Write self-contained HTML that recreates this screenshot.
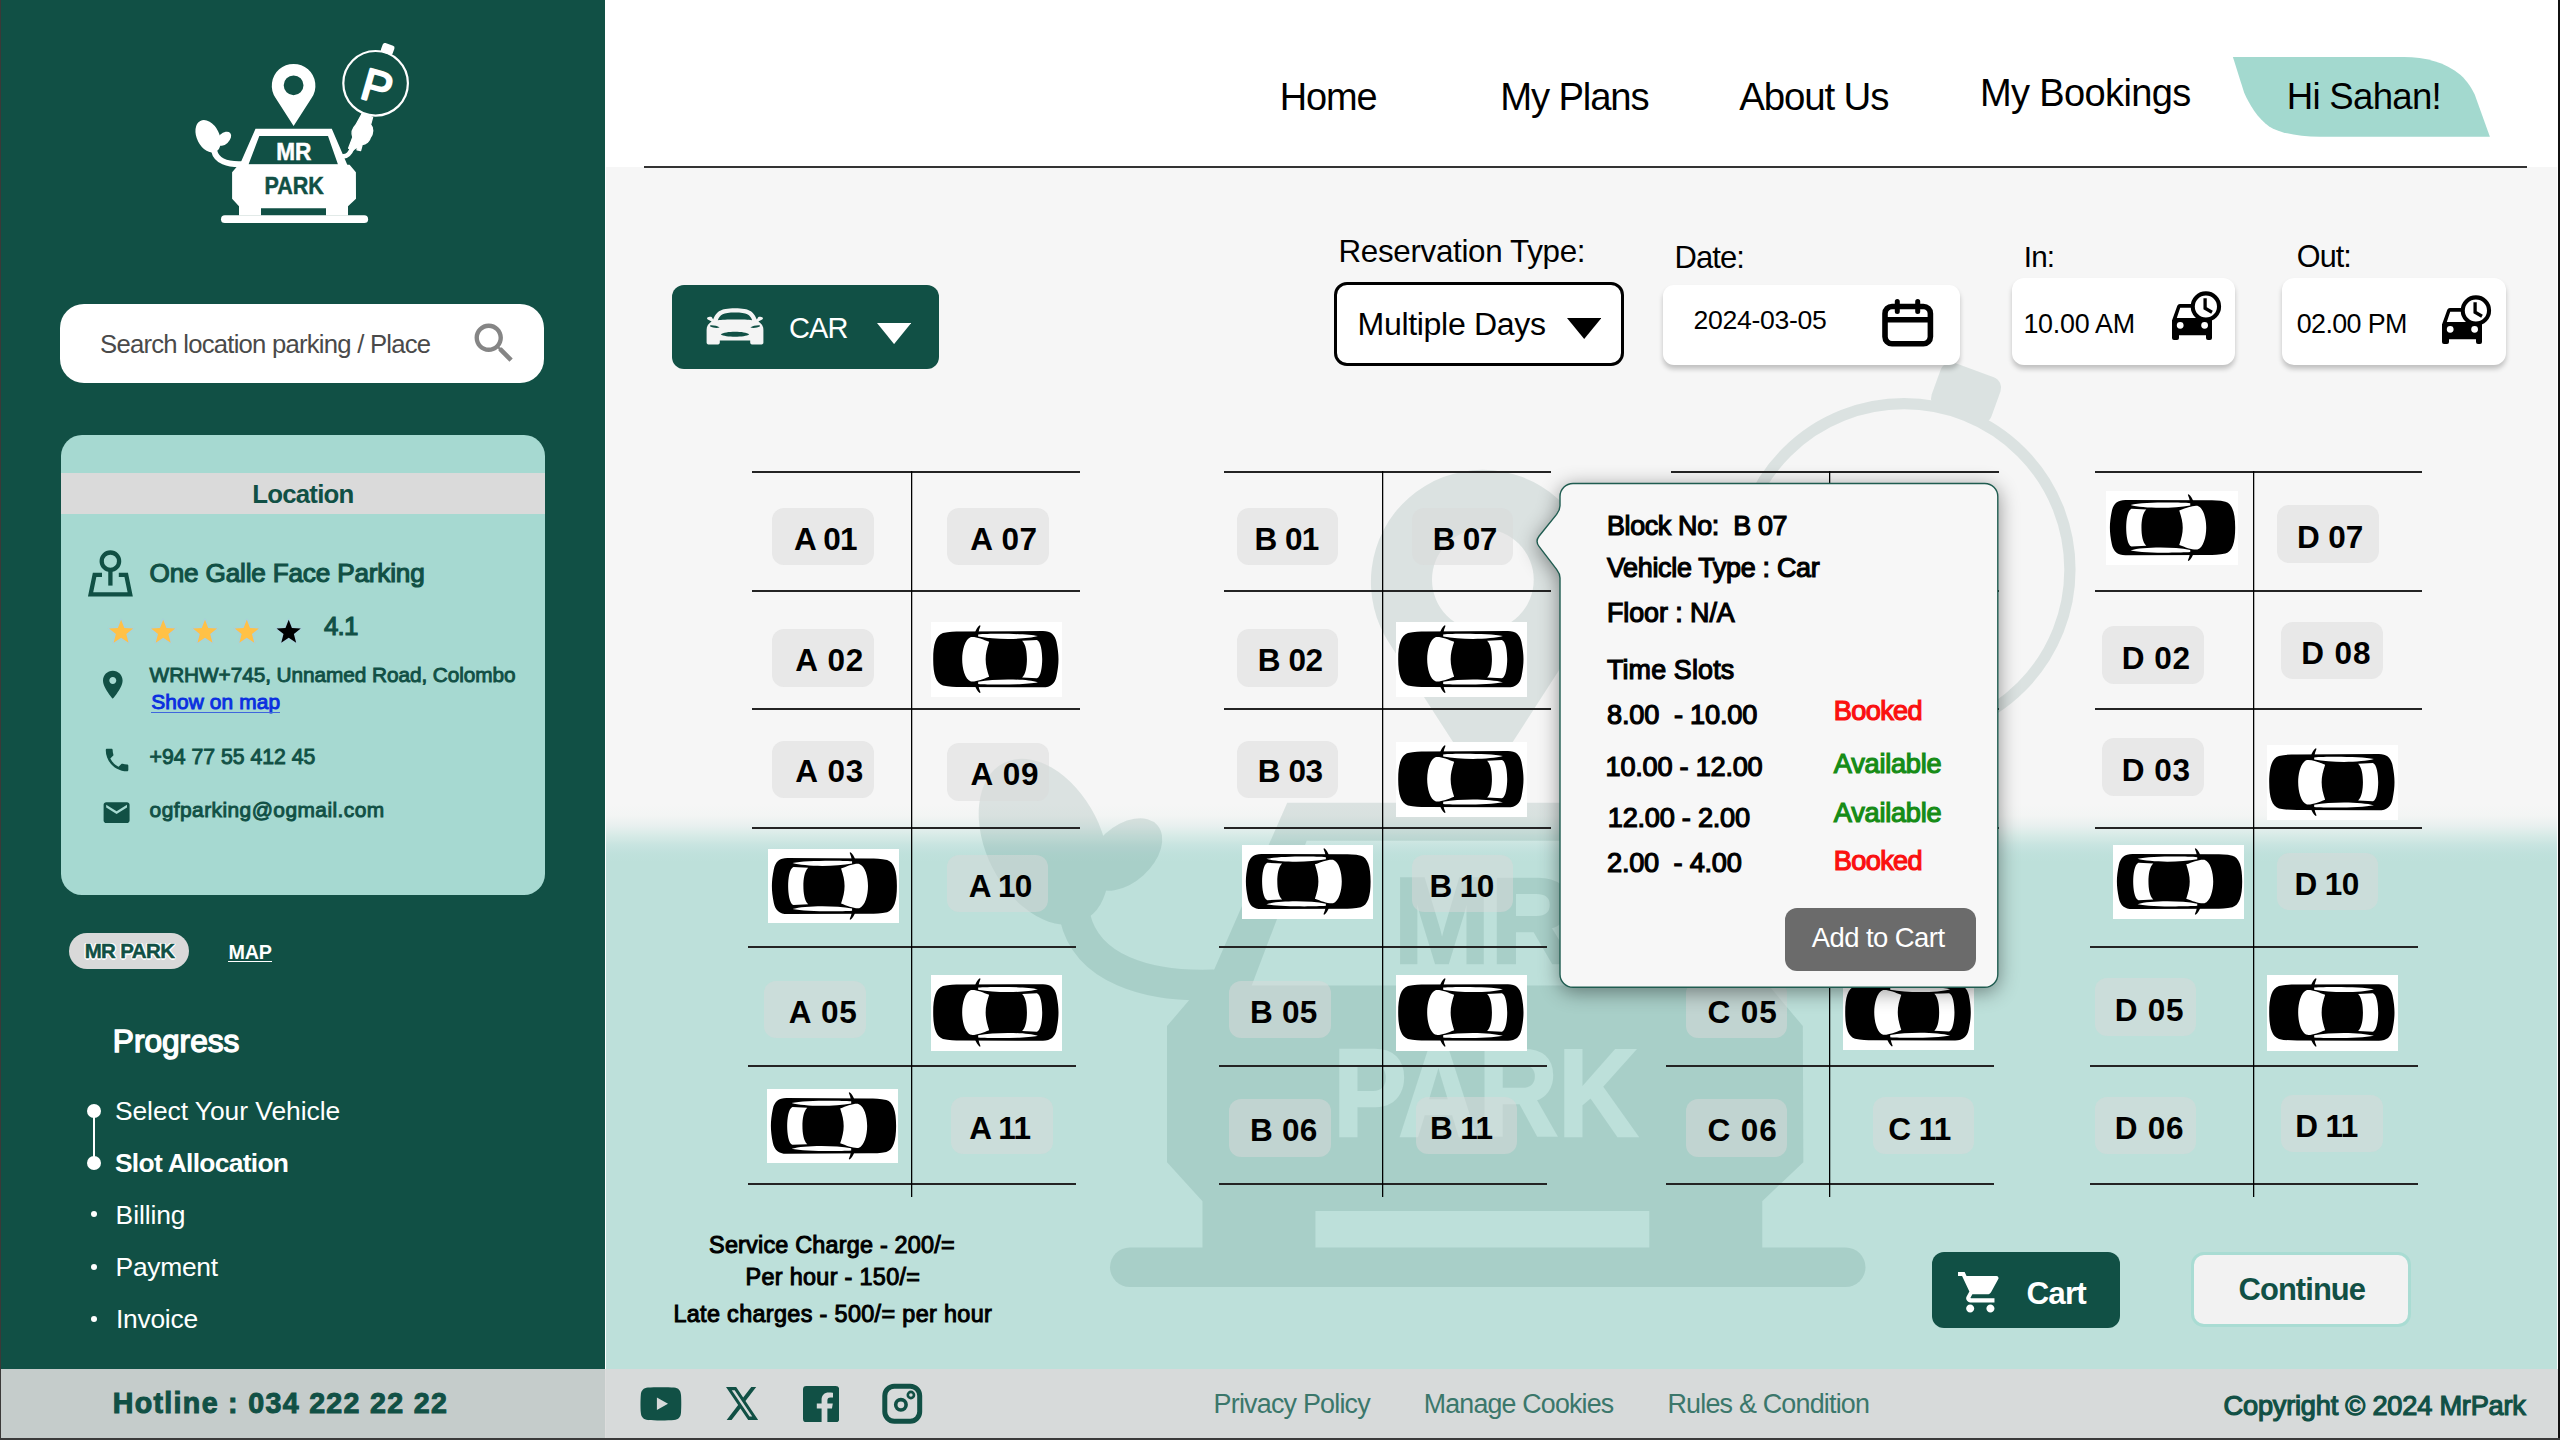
<!DOCTYPE html><html lang="en"><head><meta charset="utf-8"><title>MR PARK - Slot Allocation</title><style>
*{margin:0;padding:0;box-sizing:border-box}
html,body{width:2560px;height:1440px;overflow:hidden;background:#fff}
body{font-family:"Liberation Sans",Arial,Helvetica,sans-serif;}
#root{position:relative;width:2560px;height:1440px;overflow:hidden;background:#fff}
#root div,#root span,#root a,#root svg,#root h1,#root h2,#root p,#root li,#root button,#root label{position:absolute}
.t{white-space:pre;line-height:1;font-weight:400;text-decoration:none}
ul{list-style:none}
button{border:0;background:none;font:inherit}
.lbl{background:rgba(217,217,217,.5);border-radius:12px}
.carbg{background:#fff}
.hl{height:2px;background:#242424}
.vl{width:2px;background:linear-gradient(to right,#000 0,#000 1px,rgba(0,0,0,.28) 1px,rgba(0,0,0,.28) 2px)}
.shadow{box-shadow:0 4px 5px rgba(0,0,0,.22)}
</style></head><body><div id="root">
<div class="mainbg" style="left:605.50px;top:167.00px;width:1951.50px;height:1273.00px;background:linear-gradient(to bottom,#f6f6f6 0,#f6f6f6 637px,#f3f5f4 649px,#e8f0ef 659px,#d8ebe7 668px,#c8e4e0 678px,#c0e1dc 686px,#bde0da 695px,#bde0da 100%)"></div>
<svg class="wm" style="left:606px;top:167px" width="1951" height="1202" viewBox="606 167 1951 1202"><g transform="translate(-25.06 141.64) scale(5.136)"><g opacity="0.115"><mask id="pk" maskUnits="userSpaceOnUse" x="180" y="30" width="260" height="210"><rect x="180" y="30" width="260" height="210" fill="#fff"/><text x="294.1" y="193.7" font-size="24.1" font-family="Liberation Sans, Arial, sans-serif" font-weight="700" text-anchor="middle" textLength="59.4" lengthAdjust="spacingAndGlyphs" fill="#000" stroke="#000" stroke-width=".5">PARK</text></mask><g fill="#115045" stroke="none"><rect x="221" y="215.3" width="147.1" height="7.7" rx="3.85"/><path mask="url(#pk)" d="M232.1,172.2 L238.5,164.7 L349.6,164.7 L355.9,172.2 L356,198.7 L348,206.3 L348,215.5 L326,215.5 L326,208.2 L261,208.2 L261,215.5 L239,215.5 L239,206.3 L232.1,198.7 Z"/><path fill-rule="evenodd" d="M255.5,128.7 L331.8,128.7 L347.6,165.5 L239.4,165.5 Z M259.3,136.1 L328,136.1 L337.9,164.3 L248.6,164.3 Z"/><path fill-rule="evenodd" d="M293.6,125.9 L275.6,98 A21.8,21.8 0 1 1 311.6,98 Z M303.5,85.3 A9.9,9.9 0 1 0 283.7,85.3 A9.9,9.9 0 1 0 303.5,85.3 Z"/><ellipse cx="208.1" cy="136.3" rx="11.2" ry="17.2" transform="rotate(-27 208.1 136.3)"/><ellipse cx="223.8" cy="138.8" rx="5.5" ry="8.6" transform="rotate(48 223.8 138.8)"/><rect x="381.5" y="44.2" width="12.4" height="9.5" rx="2.2" transform="rotate(20 387.7 48.9)"/><path stroke="#115045" stroke-width="1.3" stroke-linejoin="round" d="M362.3,113.2 L372.6,117.4 L370.6,124.6 C373.6,127.6 373.4,133.6 370.3,137.6 C369.6,141 366.2,144.3 362.2,144.6 L360.6,150.6 L357,149.8 L357.6,146.6 L352.6,150.6 L348.6,148.2 L352.8,137.2 C351.4,133.2 352.6,128.2 355.8,125 Z"/></g><g fill="none" stroke="#115045" stroke-linecap="round"><path d="M214.2,151 C216.5,161 228,164.6 241,164.2" stroke-width="6"/><path d="M352,148.5 C350,154 346.5,156.2 343.2,156.4" stroke-width="4.6"/><circle cx="375.6" cy="83.3" r="32.3" stroke-width="2.2"/></g><g font-family="Liberation Sans, Arial, sans-serif" font-weight="700" text-anchor="middle"><text x="293.8" y="159.9" font-size="23.7" fill="#115045" stroke="#115045" stroke-width=".5" textLength="35.2" lengthAdjust="spacingAndGlyphs">MR</text><text x="377.2" y="102.3" font-size="45" fill="#115045" stroke="#115045" stroke-width="2.1" stroke-linejoin="round" transform="rotate(16 377.3 86.85)" style="font-weight:400">P</text></g></g></g></svg>
<aside>
<div class="side" style="left:0.00px;top:0.00px;width:604.50px;height:1440.00px;background:#115045"></div>
<svg style="left:180px;top:30px" width="260" height="210" viewBox="180 30 260 210"><g fill="#fff" stroke="none"><rect x="221" y="215.3" width="147.1" height="7.7" rx="3.85"/><path  d="M232.1,172.2 L238.5,164.7 L349.6,164.7 L355.9,172.2 L356,198.7 L348,206.3 L348,215.5 L326,215.5 L326,208.2 L261,208.2 L261,215.5 L239,215.5 L239,206.3 L232.1,198.7 Z"/><path fill-rule="evenodd" d="M255.5,128.7 L331.8,128.7 L347.6,165.5 L239.4,165.5 Z M259.3,136.1 L328,136.1 L337.9,164.3 L248.6,164.3 Z"/><path fill-rule="evenodd" d="M293.6,125.9 L275.6,98 A21.8,21.8 0 1 1 311.6,98 Z M303.5,85.3 A9.9,9.9 0 1 0 283.7,85.3 A9.9,9.9 0 1 0 303.5,85.3 Z"/><ellipse cx="208.1" cy="136.3" rx="11.2" ry="17.2" transform="rotate(-27 208.1 136.3)"/><ellipse cx="223.8" cy="138.8" rx="5.5" ry="8.6" transform="rotate(48 223.8 138.8)"/><rect x="381.5" y="44.2" width="12.4" height="9.5" rx="2.2" transform="rotate(20 387.7 48.9)"/><path stroke="#fff" stroke-width="1.3" stroke-linejoin="round" d="M362.3,113.2 L372.6,117.4 L370.6,124.6 C373.6,127.6 373.4,133.6 370.3,137.6 C369.6,141 366.2,144.3 362.2,144.6 L360.6,150.6 L357,149.8 L357.6,146.6 L352.6,150.6 L348.6,148.2 L352.8,137.2 C351.4,133.2 352.6,128.2 355.8,125 Z"/></g><g fill="none" stroke="#fff" stroke-linecap="round"><path d="M214.2,151 C216.5,161 228,164.6 241,164.2" stroke-width="6"/><path d="M352,148.5 C350,154 346.5,156.2 343.2,156.4" stroke-width="4.6"/><circle cx="375.6" cy="83.3" r="32.3" stroke-width="2.2"/></g><g font-family="Liberation Sans, Arial, sans-serif" font-weight="700" text-anchor="middle"><text x="293.8" y="159.9" font-size="23.7" fill="#fff" stroke="#fff" stroke-width=".5" textLength="35.2" lengthAdjust="spacingAndGlyphs">MR</text><text x="294.1" y="193.7" font-size="24.1" font-family="Liberation Sans, Arial, sans-serif" font-weight="700" text-anchor="middle" textLength="59.4" lengthAdjust="spacingAndGlyphs" fill="#115045" stroke="#115045" stroke-width=".5">PARK</text><text x="377.2" y="102.3" font-size="45" fill="#fff" stroke="#fff" stroke-width="2.1" stroke-linejoin="round" transform="rotate(16 377.3 86.85)" style="font-weight:400">P</text></g></svg>
<div style="left:60.00px;top:304.30px;width:484.10px;height:78.90px;background:#fff;border-radius:24px"></div>
<span class="t" style="left:100.10px;top:332.00px;font-size:25.70px;letter-spacing:-0.771px;color:#4a4a4a;">Search location parking / Place</span>
<svg style="left:468px;top:317.3px" width="52.4" height="52.4" viewBox="0 0 24 24"><path fill="#858585" d="M15.5 14h-.79l-.28-.27C15.41 12.59 16 11.11 16 9.5 16 5.91 13.09 3 9.5 3S3 5.91 3 9.5 5.91 16 9.5 16c1.61 0 3.09-.59 4.23-1.57l.27.28v.79l5 4.99L20.49 19l-4.99-5zm-6 0C7.01 14 5 11.99 5 9.5S7.01 5 9.5 5 14 7.01 14 9.5 11.99 14 9.5 14z"/></svg>
<div style="left:61.00px;top:435.00px;width:484.00px;height:459.60px;background:#a6d9d1;border-radius:21px"></div>
<div style="left:61.00px;top:472.80px;width:484.00px;height:41.20px;background:#dadada"></div>
<h2 class="t" style="left:252.20px;top:482.00px;font-size:25.83px;letter-spacing:-0.775px;color:#115045;font-weight:700;">Location</h2>
<svg style="left:84px;top:546px" width="54" height="56" viewBox="84 546 54 56"><g fill="none" stroke="#115045" stroke-width="4.3"><circle cx="110.4" cy="561.2" r="8.7"/><path d="M110.4,570 L110.4,585.6"/><path d="M102,574.9 L94.6,574.9 L90.6,594.4 L130.2,594.4 L126.2,574.9 L118.8,574.9" stroke-linejoin="miter"/></g></svg>
<span class="t" style="left:149.60px;top:560.00px;font-size:26.14px;letter-spacing:-0.177px;color:#115045;-webkit-text-stroke:1.15px #115045;">One Galle Face Parking</span>
<svg style="left:100px;top:612px" width="210" height="40" viewBox="100 612 210 40"><polygon points="121.10,619.70 124.31,627.98 133.18,628.48 126.29,634.09 128.56,642.67 121.10,637.86 113.64,642.67 115.91,634.09 109.02,628.48 117.89,627.98" fill="none" stroke="#a9cfe0" stroke-width="2.2" stroke-linejoin="round" opacity=".7"/><polygon points="121.10,619.70 124.31,627.98 133.18,628.48 126.29,634.09 128.56,642.67 121.10,637.86 113.64,642.67 115.91,634.09 109.02,628.48 117.89,627.98" fill="#ffc146"/><polygon points="163.20,619.70 166.41,627.98 175.28,628.48 168.39,634.09 170.66,642.67 163.20,637.86 155.74,642.67 158.01,634.09 151.12,628.48 159.99,627.98" fill="none" stroke="#a9cfe0" stroke-width="2.2" stroke-linejoin="round" opacity=".7"/><polygon points="163.20,619.70 166.41,627.98 175.28,628.48 168.39,634.09 170.66,642.67 163.20,637.86 155.74,642.67 158.01,634.09 151.12,628.48 159.99,627.98" fill="#ffc146"/><polygon points="205.00,619.70 208.21,627.98 217.08,628.48 210.19,634.09 212.46,642.67 205.00,637.86 197.54,642.67 199.81,634.09 192.92,628.48 201.79,627.98" fill="none" stroke="#a9cfe0" stroke-width="2.2" stroke-linejoin="round" opacity=".7"/><polygon points="205.00,619.70 208.21,627.98 217.08,628.48 210.19,634.09 212.46,642.67 205.00,637.86 197.54,642.67 199.81,634.09 192.92,628.48 201.79,627.98" fill="#ffc146"/><polygon points="246.80,619.70 250.01,627.98 258.88,628.48 251.99,634.09 254.26,642.67 246.80,637.86 239.34,642.67 241.61,634.09 234.72,628.48 243.59,627.98" fill="none" stroke="#a9cfe0" stroke-width="2.2" stroke-linejoin="round" opacity=".7"/><polygon points="246.80,619.70 250.01,627.98 258.88,628.48 251.99,634.09 254.26,642.67 246.80,637.86 239.34,642.67 241.61,634.09 234.72,628.48 243.59,627.98" fill="#ffc146"/><polygon points="288.70,619.70 291.91,627.98 300.78,628.48 293.89,634.09 296.16,642.67 288.70,637.86 281.24,642.67 283.51,634.09 276.62,628.48 285.49,627.98" fill="none" stroke="#a9cfe0" stroke-width="2.2" stroke-linejoin="round" opacity=".7"/><polygon points="288.70,619.70 291.91,627.98 300.78,628.48 293.89,634.09 296.16,642.67 288.70,637.86 281.24,642.67 283.51,634.09 276.62,628.48 285.49,627.98" fill="#000"/></svg>
<span class="t" style="left:323.90px;top:614.00px;font-size:25.94px;letter-spacing:-0.778px;color:#115045;-webkit-text-stroke:1.14px #115045;">4.1</span>
<svg style="left:95.8px;top:667.5px" width="33.6" height="33.6" viewBox="0 0 24 24"><path fill="#115045" d="M12 2C8.13 2 5 5.13 5 9c0 5.25 7 13 7 13s7-7.75 7-13c0-3.87-3.13-7-7-7zm0 9.500c-1.38 0-2.5-1.12-2.5-2.5s1.12-2.5 2.5-2.5 2.5 1.12 2.5 2.5-1.12 2.5-2.5 2.5z"/></svg>
<span class="t" style="left:149.60px;top:665.00px;font-size:20.77px;letter-spacing:-0.052px;color:#115045;-webkit-text-stroke:0.91px #115045;">WRHW+745, Unnamed Road, Colombo</span>
<a class="t" style="left:151.20px;top:692.00px;font-size:20.92px;letter-spacing:0.100px;color:#0a2fe0;-webkit-text-stroke:0.92px #0a2fe0;">Show on map</a>
<div style="left:151.20px;top:711.50px;width:128.90px;height:1.70px;background:#3f66dd"></div>
<svg style="left:101.6px;top:745.2px" width="30.1" height="30.1" viewBox="0 0 24 24"><path fill="#115045" d="M6.62 10.79c1.44 2.83 3.76 5.14 6.59 6.59l2.2-2.2c.27-.27.67-.36 1.02-.24 1.12.37 2.33.57 3.57.57.55 0 1 .45 1 1V20c0 .55-.45 1-1 1-9.39 0-17-7.61-17-17 0-.55.45-1 1-1h3.5c.55 0 1 .45 1 1 0 1.25.2 2.45.57 3.57.11.35.03.74-.25 1.02l-2.2 2.2z"/></svg>
<span class="t" style="left:149.60px;top:746.00px;font-size:21.21px;letter-spacing:0.001px;color:#115045;-webkit-text-stroke:0.93px #115045;">+94 77 55 412 45</span>
<svg style="left:101.2px;top:797.2px" width="31.2" height="31.2" viewBox="0 0 24 24"><path fill="#115045" d="M20 4H4c-1.1 0-1.99.9-1.99 2L2 18c0 1.1.9 2 2 2h16c1.1 0 2-.9 2-2V6c0-1.1-.9-2-2-2zm0 4l-8 5-8-5V6l8 5 8-5v2z"/></svg>
<span class="t" style="left:149.60px;top:800.00px;font-size:20.92px;letter-spacing:0.443px;color:#115045;-webkit-text-stroke:0.92px #115045;">ogfparking@ogmail.com</span>
<div style="left:68.75px;top:932.80px;width:120.25px;height:36.40px;background:#d9d9d9;border-radius:18.2px"></div>
<span class="t" style="left:84.70px;top:941.00px;font-size:20.47px;letter-spacing:-0.614px;color:#115045;font-weight:700;text-shadow:-1.5px 0 #fff,1.5px 0 #fff,0 -1.5px #fff,0 1.5px #fff,-1.1px -1.1px #fff,1.1px -1.1px #fff,-1.1px 1.1px #fff,1.1px 1.1px #fff,0 0 1px #fff;-webkit-text-stroke:.5px #115045;">MR PARK</span>
<a class="t" style="left:228.40px;top:943.00px;font-size:19.75px;letter-spacing:-0.196px;color:#fff;font-weight:700;">MAP</a>
<div style="left:228.40px;top:960.60px;width:43.50px;height:1.70px;background:#fff"></div>
<h2 class="t" style="left:112.80px;top:1026.00px;font-size:31.66px;letter-spacing:-0.016px;color:#fff;-webkit-text-stroke:1.39px #fff;">Progress</h2>
<div style="left:92.80px;top:1110.60px;width:2.60px;height:52.30px;background:#fff"></div>
<div style="left:87.00px;top:1103.50px;width:14.20px;height:14.20px;background:#fff;border-radius:50%"></div>
<div style="left:87.00px;top:1155.80px;width:14.20px;height:14.20px;background:#fff;border-radius:50%"></div>
<div style="left:91.10px;top:1211.40px;width:6.00px;height:6.00px;background:#fff;border-radius:50%"></div>
<div style="left:91.10px;top:1263.60px;width:6.00px;height:6.00px;background:#fff;border-radius:50%"></div>
<div style="left:91.10px;top:1315.50px;width:6.00px;height:6.00px;background:#fff;border-radius:50%"></div>
<span class="t" style="left:114.90px;top:1098.00px;font-size:26.43px;letter-spacing:-0.052px;color:#fff;">Select Your Vehicle</span>
<span class="t" style="left:114.90px;top:1150.00px;font-size:26.43px;letter-spacing:-0.704px;color:#fff;font-weight:700;">Slot Allocation</span>
<span class="t" style="left:115.60px;top:1202.00px;font-size:26.43px;letter-spacing:-0.088px;color:#fff;">Billing</span>
<span class="t" style="left:115.60px;top:1254.00px;font-size:26.43px;letter-spacing:-0.302px;color:#fff;">Payment</span>
<span class="t" style="left:115.90px;top:1306.00px;font-size:26.43px;letter-spacing:-0.241px;color:#fff;">Invoice</span>
</aside>
<header>
<div style="left:604.50px;top:0.00px;width:1953.00px;height:167.00px;background:#fff"></div>
<nav>
<a class="t" style="left:1279.80px;top:79.00px;font-size:37.94px;letter-spacing:-1.138px;color:#000;">Home</a>
<a class="t" style="left:1500.30px;top:78.00px;font-size:38.26px;letter-spacing:-1.148px;color:#000;">My Plans</a>
<a class="t" style="left:1739.30px;top:78.00px;font-size:38.46px;letter-spacing:-1.154px;color:#000;">About Us</a>
<a class="t" style="left:1980.00px;top:74.00px;font-size:38.05px;letter-spacing:-0.646px;color:#000;">My Bookings</a>
<svg style="left:2225px;top:50px" width="275" height="95" viewBox="2225 50 275 95"><path fill="#a3d9cf" d="M2232.9,57 L2404,57 C2425,57 2445,62 2460.6,75 C2468,82 2472,89 2474.8,94.7 L2489.9,136.8 L2320,136.8 C2298,136.8 2280,133 2269.2,126.4 C2258,119 2249,104 2244.1,92.5 Z"/></svg>
<a class="t" style="left:2286.80px;top:79.00px;font-size:36.60px;letter-spacing:-0.719px;color:#000;">Hi Sahan!</a>
</nav>
<div style="left:644.00px;top:166.20px;width:1883.00px;height:2.20px;background:#333"></div>
</header>
<main>
<button style="left:672.30px;top:284.60px;width:266.90px;height:84.40px;background:#115045;border-radius:12px"></button>
<svg style="left:700px;top:300px" width="70" height="52" viewBox="700 300 70 52">
<path fill="#f4f4f4" d="M713.2,319.6 C716,312 720,308.2 735,308.2 C750,308.2 754,312 756.8,319.6 L757.6,318.2 C758,317 759.2,316.6 760.4,316.8 L762.2,317.2 C763.2,317.6 763.2,318.8 762.2,319.4 L758.4,321.4 C761.6,323.4 763.4,326 763.4,330 L763.4,342.6 C763.4,343.8 762.8,344.4 761.6,344.4 L752,344.4 C750.8,344.4 750.2,343.8 750.2,342.6 L750.2,340.4 L719.8,340.4 L719.8,342.6 C719.8,343.8 719.2,344.4 718,344.4 L708.4,344.4 C707.2,344.4 706.6,343.8 706.6,342.6 L706.6,330 C706.6,326 708.4,323.4 711.6,321.4 L707.8,319.4 C706.8,318.8 706.8,317.6 707.8,317.2 L709.6,316.8 C710.8,316.6 712,317 712.4,318.2 Z"/>
<g fill="#115045"><path d="M717.8,320.2 C720,314.4 723,312.4 735,312.4 C747,312.4 750,314.4 752.2,320.2 C746,319.2 724,319.2 717.8,320.2 Z"/>
<path d="M710.2,325.2 C713.6,325 717.4,325.8 719.6,327.6 C716.6,328.2 712.6,327.8 710.2,326.6 Z"/>
<path d="M759.8,325.2 C756.4,325 752.6,325.8 750.4,327.6 C753.4,328.2 757.4,327.8 759.8,326.6 Z"/>
<path d="M720.8,334.4 C725,331 745,331 749.2,334.4 C745,337.4 725,337.4 720.8,334.4 Z"/></g></svg>
<span class="t" style="left:788.90px;top:314.00px;font-size:29.01px;letter-spacing:-0.870px;color:#fff;">CAR</span>
<svg style="left:876.6px;top:323.3px" width="34.2" height="21.1" viewBox="0 0 34.2 21.1"><path fill="#fff" d="M0,0 L34.2,0 L17.1,21.1 Z"/></svg>
<label class="t" style="left:1338.50px;top:236.00px;font-size:31.37px;letter-spacing:-0.325px;color:#000;">Reservation Type:</label>
<div style="left:1333.50px;top:281.90px;width:290.50px;height:84.10px;background:#fff;border:3px solid #000;border-radius:13px"></div>
<span class="t" style="left:1357.50px;top:308.00px;font-size:32.10px;letter-spacing:-0.326px;color:#000;">Multiple Days</span>
<svg style="left:1566.9px;top:318px" width="34.4" height="21" viewBox="0 0 34.4 21"><path fill="#000" d="M0,0 L34.4,0 L17.2,21 Z"/></svg>
<label class="t" style="left:1674.50px;top:243.00px;font-size:30.97px;letter-spacing:-0.929px;color:#000;">Date:</label>
<div class="shadow" style="left:1662.80px;top:285.00px;width:297.10px;height:79.60px;background:#fff;border-radius:11px"></div>
<span class="t" style="left:1693.40px;top:307.00px;font-size:26.58px;letter-spacing:-0.284px;color:#000;">2024-03-05</span>
<svg style="left:1876px;top:294px" width="64" height="58" viewBox="1876 294 64 58"><g fill="none" stroke="#000" stroke-width="5.6"><rect x="1885" y="306.5" width="45.4" height="37.3" rx="7"/><path d="M1885,319.8 L1930.4,319.8"/><path d="M1897.3,301.6 L1897.3,311.6 M1917.7,301.6 L1917.7,311.6" stroke-linecap="round" stroke-width="5"/></g></svg>
<label class="t" style="left:2023.80px;top:242.00px;font-size:29.66px;letter-spacing:-0.890px;color:#000;">In:</label>
<div class="shadow" style="left:2011.80px;top:278.30px;width:223.60px;height:86.40px;background:#fff;border-radius:12px"></div>
<span class="t" style="left:2023.40px;top:311.00px;font-size:26.87px;letter-spacing:-0.247px;color:#000;">10.00 AM</span>
<svg style="left:2166px;top:286px" width="62" height="60" viewBox="2166 286 62 60">
<path fill="#000" fill-rule="evenodd" d="M2179.8,304 L2202,304 L2212,318 L2212,338 Q2212,340 2210,340 L2208,340 Q2206,340 2206,338 L2206,335.2 L2179,335.2 L2179,338 Q2179,340 2177,340 L2174,340 Q2172,340 2172,338 L2172,320.5 L2177.3,305.8 Q2178,304 2179.8,304 Z M2180.2,307.7 L2196,307.7 L2201,317.9 L2176.8,317.9 Z M2183.6,325.3 A3.4,3.4 0 1 0 2176.8,325.3 A3.4,3.4 0 1 0 2183.6,325.3 Z M2208,325.3 A3.4,3.4 0 1 0 2201.2,325.3 A3.4,3.4 0 1 0 2208,325.3 Z"/>
<circle cx="2205.9" cy="306.5" r="13.15" fill="#fff" stroke="#000" stroke-width="4.1"/>
<path d="M2205.1,298.2 L2205.1,308.3 L2212,312.2" fill="none" stroke="#000" stroke-width="3.3"/></svg>
<label class="t" style="left:2296.80px;top:241.00px;font-size:30.56px;letter-spacing:-0.917px;color:#000;">Out:</label>
<div class="shadow" style="left:2282.10px;top:278.30px;width:224.00px;height:86.40px;background:#fff;border-radius:12px"></div>
<span class="t" style="left:2296.80px;top:311.00px;font-size:26.87px;letter-spacing:-0.615px;color:#000;">02.00 PM</span>
<svg style="left:2436px;top:289.8px" width="62" height="60" viewBox="2166 286 62 60">
<path fill="#000" fill-rule="evenodd" d="M2179.8,304 L2202,304 L2212,318 L2212,338 Q2212,340 2210,340 L2208,340 Q2206,340 2206,338 L2206,335.2 L2179,335.2 L2179,338 Q2179,340 2177,340 L2174,340 Q2172,340 2172,338 L2172,320.5 L2177.3,305.8 Q2178,304 2179.8,304 Z M2180.2,307.7 L2196,307.7 L2201,317.9 L2176.8,317.9 Z M2183.6,325.3 A3.4,3.4 0 1 0 2176.8,325.3 A3.4,3.4 0 1 0 2183.6,325.3 Z M2208,325.3 A3.4,3.4 0 1 0 2201.2,325.3 A3.4,3.4 0 1 0 2208,325.3 Z"/>
<circle cx="2205.9" cy="306.5" r="13.15" fill="#fff" stroke="#000" stroke-width="4.1"/>
<path d="M2205.1,298.2 L2205.1,308.3 L2212,312.2" fill="none" stroke="#000" stroke-width="3.3"/></svg>
<section>
<div class="hl" style="left:752.20px;top:471.00px;width:327.80px;height:2.00px;"></div><div class="hl" style="left:752.20px;top:590.00px;width:327.80px;height:2.00px;"></div><div class="hl" style="left:752.20px;top:708.00px;width:327.80px;height:2.00px;"></div><div class="hl" style="left:752.20px;top:827.00px;width:327.80px;height:2.00px;"></div><div class="hl" style="left:748.00px;top:946.00px;width:327.80px;height:2.00px;"></div><div class="hl" style="left:748.00px;top:1065.00px;width:327.80px;height:2.00px;"></div><div class="hl" style="left:748.00px;top:1183.00px;width:327.80px;height:2.00px;"></div><div class="vl" style="left:911.00px;top:471.00px;width:2.00px;height:726.40px;"></div>
<div class="lbl" style="left:771.70px;top:507.80px;width:102.20px;height:57.50px;"></div><span class="t" style="left:794.05px;top:524.00px;font-size:31.52px;letter-spacing:-0.600px;color:#000;font-weight:700;">A 01</span>
<div class="lbl" style="left:946.70px;top:507.80px;width:102.20px;height:57.50px;"></div><span class="t" style="left:970.30px;top:524.00px;font-size:31.52px;letter-spacing:0.434px;color:#000;font-weight:700;">A 07</span>
<div class="lbl" style="left:771.70px;top:628.60px;width:102.20px;height:58.10px;"></div><span class="t" style="left:795.30px;top:645.00px;font-size:31.52px;letter-spacing:0.867px;color:#000;font-weight:700;">A 02</span>
<svg class="carbg" style="left:930.6px;top:622.2px" width="131.4" height="75.0" viewBox="0 0 131.5 75" preserveAspectRatio="none"><g><path fill="#000" d="M2.2,37.2 C2.2,22 5,13.2 12,11 C18,9.5 24,9.5 30,9.5 L112,9.1 C120,9.1 124,13 125.6,20 C127,27 127.6,32 127.6,37.2 C127.6,42.4 127,47.4 125.6,54.4 C124,61.4 120,65.3 112,65.3 L30,64.9 C24,64.9 18,64.9 12,63.4 C5,61.2 2.2,52.4 2.2,37.2 Z"/>
<path fill="#000" d="M44.1,10.4 C45,7.6 46.8,4.8 48.8,3.3 L49.6,3.8 C48.6,6.2 47.8,8.6 47.4,11 Z M44.1,64 C45,66.8 46.8,69.6 48.8,71.1 L49.6,70.6 C48.6,68.2 47.8,65.8 47.4,63.4 Z"/>
<g fill="#fff"><path d="M40,15 C34,17 31.2,28 31.2,37.2 C31.2,46.4 34,57.4 40,59.4 C45,60 52,57 58.2,54.7 C56,48 54.7,43 54.7,37.2 C54.7,31.4 56,26.4 58.2,19.7 C52,17.4 45,14.4 40,15 Z"/>
<path d="M91.2,18.8 L106,18.1 C110,19.4 111.3,30 111.3,37.2 C111.3,44.4 110,55 106,56.3 L91.2,55.6 C95,52 96,44 96,37.2 C96,30.4 95,22.4 91.2,18.8 Z"/>
<path d="M47.2,12.4 C60,11.4 95,11.4 106.9,14.1 C95,17.6 65,18 47.2,14.6 Z"/>
<path d="M47.2,62 C60,63 95,63 106.9,60.3 C95,56.8 65,56.4 47.2,59.8 Z"/></g></g></svg>
<div class="lbl" style="left:771.70px;top:740.60px;width:102.20px;height:57.70px;"></div><span class="t" style="left:795.30px;top:756.00px;font-size:31.52px;letter-spacing:0.867px;color:#000;font-weight:700;">A 03</span>
<div class="lbl" style="left:946.70px;top:742.50px;width:102.20px;height:58.10px;"></div><span class="t" style="left:970.55px;top:759.00px;font-size:31.52px;letter-spacing:0.900px;color:#000;font-weight:700;">A 09</span>
<svg class="carbg" style="left:767.8px;top:848.6px" width="131.1" height="74.7" viewBox="0 0 131.5 75" preserveAspectRatio="none"><g transform="translate(131.5 0) scale(-1 1)"><path fill="#000" d="M2.2,37.2 C2.2,22 5,13.2 12,11 C18,9.5 24,9.5 30,9.5 L112,9.1 C120,9.1 124,13 125.6,20 C127,27 127.6,32 127.6,37.2 C127.6,42.4 127,47.4 125.6,54.4 C124,61.4 120,65.3 112,65.3 L30,64.9 C24,64.9 18,64.9 12,63.4 C5,61.2 2.2,52.4 2.2,37.2 Z"/>
<path fill="#000" d="M44.1,10.4 C45,7.6 46.8,4.8 48.8,3.3 L49.6,3.8 C48.6,6.2 47.8,8.6 47.4,11 Z M44.1,64 C45,66.8 46.8,69.6 48.8,71.1 L49.6,70.6 C48.6,68.2 47.8,65.8 47.4,63.4 Z"/>
<g fill="#fff"><path d="M40,15 C34,17 31.2,28 31.2,37.2 C31.2,46.4 34,57.4 40,59.4 C45,60 52,57 58.2,54.7 C56,48 54.7,43 54.7,37.2 C54.7,31.4 56,26.4 58.2,19.7 C52,17.4 45,14.4 40,15 Z"/>
<path d="M91.2,18.8 L106,18.1 C110,19.4 111.3,30 111.3,37.2 C111.3,44.4 110,55 106,56.3 L91.2,55.6 C95,52 96,44 96,37.2 C96,30.4 95,22.4 91.2,18.8 Z"/>
<path d="M47.2,12.4 C60,11.4 95,11.4 106.9,14.1 C95,17.6 65,18 47.2,14.6 Z"/>
<path d="M47.2,62 C60,63 95,63 106.9,60.3 C95,56.8 65,56.4 47.2,59.8 Z"/></g></g></svg>
<div class="lbl" style="left:946.70px;top:854.70px;width:101.60px;height:57.50px;"></div><span class="t" style="left:968.75px;top:871.00px;font-size:31.52px;letter-spacing:-0.600px;color:#000;font-weight:700;">A 10</span>
<div class="lbl" style="left:763.90px;top:980.60px;width:102.20px;height:57.40px;"></div><span class="t" style="left:788.75px;top:997.00px;font-size:31.52px;letter-spacing:0.900px;color:#000;font-weight:700;">A 05</span>
<svg class="carbg" style="left:930.6px;top:975.0px" width="131.4" height="75.6" viewBox="0 0 131.5 75" preserveAspectRatio="none"><g><path fill="#000" d="M2.2,37.2 C2.2,22 5,13.2 12,11 C18,9.5 24,9.5 30,9.5 L112,9.1 C120,9.1 124,13 125.6,20 C127,27 127.6,32 127.6,37.2 C127.6,42.4 127,47.4 125.6,54.4 C124,61.4 120,65.3 112,65.3 L30,64.9 C24,64.9 18,64.9 12,63.4 C5,61.2 2.2,52.4 2.2,37.2 Z"/>
<path fill="#000" d="M44.1,10.4 C45,7.6 46.8,4.8 48.8,3.3 L49.6,3.8 C48.6,6.2 47.8,8.6 47.4,11 Z M44.1,64 C45,66.8 46.8,69.6 48.8,71.1 L49.6,70.6 C48.6,68.2 47.8,65.8 47.4,63.4 Z"/>
<g fill="#fff"><path d="M40,15 C34,17 31.2,28 31.2,37.2 C31.2,46.4 34,57.4 40,59.4 C45,60 52,57 58.2,54.7 C56,48 54.7,43 54.7,37.2 C54.7,31.4 56,26.4 58.2,19.7 C52,17.4 45,14.4 40,15 Z"/>
<path d="M91.2,18.8 L106,18.1 C110,19.4 111.3,30 111.3,37.2 C111.3,44.4 110,55 106,56.3 L91.2,55.6 C95,52 96,44 96,37.2 C96,30.4 95,22.4 91.2,18.8 Z"/>
<path d="M47.2,12.4 C60,11.4 95,11.4 106.9,14.1 C95,17.6 65,18 47.2,14.6 Z"/>
<path d="M47.2,62 C60,63 95,63 106.9,60.3 C95,56.8 65,56.4 47.2,59.8 Z"/></g></g></svg>
<svg class="carbg" style="left:766.7px;top:1088.9px" width="131.3" height="74.4" viewBox="0 0 131.5 75" preserveAspectRatio="none"><g transform="translate(131.5 0) scale(-1 1)"><path fill="#000" d="M2.2,37.2 C2.2,22 5,13.2 12,11 C18,9.5 24,9.5 30,9.5 L112,9.1 C120,9.1 124,13 125.6,20 C127,27 127.6,32 127.6,37.2 C127.6,42.4 127,47.4 125.6,54.4 C124,61.4 120,65.3 112,65.3 L30,64.9 C24,64.9 18,64.9 12,63.4 C5,61.2 2.2,52.4 2.2,37.2 Z"/>
<path fill="#000" d="M44.1,10.4 C45,7.6 46.8,4.8 48.8,3.3 L49.6,3.8 C48.6,6.2 47.8,8.6 47.4,11 Z M44.1,64 C45,66.8 46.8,69.6 48.8,71.1 L49.6,70.6 C48.6,68.2 47.8,65.8 47.4,63.4 Z"/>
<g fill="#fff"><path d="M40,15 C34,17 31.2,28 31.2,37.2 C31.2,46.4 34,57.4 40,59.4 C45,60 52,57 58.2,54.7 C56,48 54.7,43 54.7,37.2 C54.7,31.4 56,26.4 58.2,19.7 C52,17.4 45,14.4 40,15 Z"/>
<path d="M91.2,18.8 L106,18.1 C110,19.4 111.3,30 111.3,37.2 C111.3,44.4 110,55 106,56.3 L91.2,55.6 C95,52 96,44 96,37.2 C96,30.4 95,22.4 91.2,18.8 Z"/>
<path d="M47.2,12.4 C60,11.4 95,11.4 106.9,14.1 C95,17.6 65,18 47.2,14.6 Z"/>
<path d="M47.2,62 C60,63 95,63 106.9,60.3 C95,56.8 65,56.4 47.2,59.8 Z"/></g></g></svg>
<div class="lbl" style="left:951.40px;top:1097.00px;width:101.40px;height:57.20px;"></div><span class="t" style="left:969.22px;top:1113.00px;font-size:31.52px;letter-spacing:-0.600px;color:#000;font-weight:700;">A 11</span>
</section><section>
<div class="hl" style="left:1223.60px;top:471.00px;width:327.80px;height:2.00px;"></div><div class="hl" style="left:1223.60px;top:590.00px;width:327.80px;height:2.00px;"></div><div class="hl" style="left:1223.60px;top:708.00px;width:327.80px;height:2.00px;"></div><div class="hl" style="left:1223.60px;top:827.00px;width:327.80px;height:2.00px;"></div><div class="hl" style="left:1219.40px;top:946.00px;width:327.80px;height:2.00px;"></div><div class="hl" style="left:1219.40px;top:1065.00px;width:327.80px;height:2.00px;"></div><div class="hl" style="left:1219.40px;top:1183.00px;width:327.80px;height:2.00px;"></div><div class="vl" style="left:1382.00px;top:471.00px;width:2.00px;height:726.40px;"></div>
<div class="lbl" style="left:1237.00px;top:507.80px;width:101.00px;height:57.50px;"></div><span class="t" style="left:1254.57px;top:524.00px;font-size:31.52px;letter-spacing:-0.600px;color:#000;font-weight:700;">B 01</span>
<div class="lbl" style="left:1411.70px;top:507.80px;width:101.60px;height:57.50px;"></div><span class="t" style="left:1432.80px;top:524.00px;font-size:31.52px;letter-spacing:-0.722px;color:#000;font-weight:700;">B 07</span>
<div class="lbl" style="left:1237.00px;top:628.60px;width:101.00px;height:58.10px;"></div><span class="t" style="left:1257.80px;top:645.00px;font-size:31.52px;letter-spacing:-0.455px;color:#000;font-weight:700;">B 02</span>
<svg class="carbg" style="left:1395.8px;top:622.2px" width="131.4" height="75.0" viewBox="0 0 131.5 75" preserveAspectRatio="none"><g><path fill="#000" d="M2.2,37.2 C2.2,22 5,13.2 12,11 C18,9.5 24,9.5 30,9.5 L112,9.1 C120,9.1 124,13 125.6,20 C127,27 127.6,32 127.6,37.2 C127.6,42.4 127,47.4 125.6,54.4 C124,61.4 120,65.3 112,65.3 L30,64.9 C24,64.9 18,64.9 12,63.4 C5,61.2 2.2,52.4 2.2,37.2 Z"/>
<path fill="#000" d="M44.1,10.4 C45,7.6 46.8,4.8 48.8,3.3 L49.6,3.8 C48.6,6.2 47.8,8.6 47.4,11 Z M44.1,64 C45,66.8 46.8,69.6 48.8,71.1 L49.6,70.6 C48.6,68.2 47.8,65.8 47.4,63.4 Z"/>
<g fill="#fff"><path d="M40,15 C34,17 31.2,28 31.2,37.2 C31.2,46.4 34,57.4 40,59.4 C45,60 52,57 58.2,54.7 C56,48 54.7,43 54.7,37.2 C54.7,31.4 56,26.4 58.2,19.7 C52,17.4 45,14.4 40,15 Z"/>
<path d="M91.2,18.8 L106,18.1 C110,19.4 111.3,30 111.3,37.2 C111.3,44.4 110,55 106,56.3 L91.2,55.6 C95,52 96,44 96,37.2 C96,30.4 95,22.4 91.2,18.8 Z"/>
<path d="M47.2,12.4 C60,11.4 95,11.4 106.9,14.1 C95,17.6 65,18 47.2,14.6 Z"/>
<path d="M47.2,62 C60,63 95,63 106.9,60.3 C95,56.8 65,56.4 47.2,59.8 Z"/></g></g></svg>
<div class="lbl" style="left:1237.00px;top:740.60px;width:101.00px;height:57.70px;"></div><span class="t" style="left:1257.80px;top:756.00px;font-size:31.52px;letter-spacing:-0.455px;color:#000;font-weight:700;">B 03</span>
<svg class="carbg" style="left:1395.8px;top:742.2px" width="131.4" height="75.0" viewBox="0 0 131.5 75" preserveAspectRatio="none"><g><path fill="#000" d="M2.2,37.2 C2.2,22 5,13.2 12,11 C18,9.5 24,9.5 30,9.5 L112,9.1 C120,9.1 124,13 125.6,20 C127,27 127.6,32 127.6,37.2 C127.6,42.4 127,47.4 125.6,54.4 C124,61.4 120,65.3 112,65.3 L30,64.9 C24,64.9 18,64.9 12,63.4 C5,61.2 2.2,52.4 2.2,37.2 Z"/>
<path fill="#000" d="M44.1,10.4 C45,7.6 46.8,4.8 48.8,3.3 L49.6,3.8 C48.6,6.2 47.8,8.6 47.4,11 Z M44.1,64 C45,66.8 46.8,69.6 48.8,71.1 L49.6,70.6 C48.6,68.2 47.8,65.8 47.4,63.4 Z"/>
<g fill="#fff"><path d="M40,15 C34,17 31.2,28 31.2,37.2 C31.2,46.4 34,57.4 40,59.4 C45,60 52,57 58.2,54.7 C56,48 54.7,43 54.7,37.2 C54.7,31.4 56,26.4 58.2,19.7 C52,17.4 45,14.4 40,15 Z"/>
<path d="M91.2,18.8 L106,18.1 C110,19.4 111.3,30 111.3,37.2 C111.3,44.4 110,55 106,56.3 L91.2,55.6 C95,52 96,44 96,37.2 C96,30.4 95,22.4 91.2,18.8 Z"/>
<path d="M47.2,12.4 C60,11.4 95,11.4 106.9,14.1 C95,17.6 65,18 47.2,14.6 Z"/>
<path d="M47.2,62 C60,63 95,63 106.9,60.3 C95,56.8 65,56.4 47.2,59.8 Z"/></g></g></svg>
<svg class="carbg" style="left:1242.2px;top:845.0px" width="130.8" height="73.6" viewBox="0 0 131.5 75" preserveAspectRatio="none"><g transform="translate(131.5 0) scale(-1 1)"><path fill="#000" d="M2.2,37.2 C2.2,22 5,13.2 12,11 C18,9.5 24,9.5 30,9.5 L112,9.1 C120,9.1 124,13 125.6,20 C127,27 127.6,32 127.6,37.2 C127.6,42.4 127,47.4 125.6,54.4 C124,61.4 120,65.3 112,65.3 L30,64.9 C24,64.9 18,64.9 12,63.4 C5,61.2 2.2,52.4 2.2,37.2 Z"/>
<path fill="#000" d="M44.1,10.4 C45,7.6 46.8,4.8 48.8,3.3 L49.6,3.8 C48.6,6.2 47.8,8.6 47.4,11 Z M44.1,64 C45,66.8 46.8,69.6 48.8,71.1 L49.6,70.6 C48.6,68.2 47.8,65.8 47.4,63.4 Z"/>
<g fill="#fff"><path d="M40,15 C34,17 31.2,28 31.2,37.2 C31.2,46.4 34,57.4 40,59.4 C45,60 52,57 58.2,54.7 C56,48 54.7,43 54.7,37.2 C54.7,31.4 56,26.4 58.2,19.7 C52,17.4 45,14.4 40,15 Z"/>
<path d="M91.2,18.8 L106,18.1 C110,19.4 111.3,30 111.3,37.2 C111.3,44.4 110,55 106,56.3 L91.2,55.6 C95,52 96,44 96,37.2 C96,30.4 95,22.4 91.2,18.8 Z"/>
<path d="M47.2,12.4 C60,11.4 95,11.4 106.9,14.1 C95,17.6 65,18 47.2,14.6 Z"/>
<path d="M47.2,62 C60,63 95,63 106.9,60.3 C95,56.8 65,56.4 47.2,59.8 Z"/></g></g></svg>
<div class="lbl" style="left:1411.70px;top:854.70px;width:101.60px;height:57.50px;"></div><span class="t" style="left:1429.42px;top:871.00px;font-size:31.52px;letter-spacing:-0.600px;color:#000;font-weight:700;">B 10</span>
<div class="lbl" style="left:1229.20px;top:980.60px;width:101.40px;height:57.40px;"></div><span class="t" style="left:1250.00px;top:997.00px;font-size:31.52px;letter-spacing:0.211px;color:#000;font-weight:700;">B 05</span>
<svg class="carbg" style="left:1395.8px;top:975.0px" width="131.4" height="75.6" viewBox="0 0 131.5 75" preserveAspectRatio="none"><g><path fill="#000" d="M2.2,37.2 C2.2,22 5,13.2 12,11 C18,9.5 24,9.5 30,9.5 L112,9.1 C120,9.1 124,13 125.6,20 C127,27 127.6,32 127.6,37.2 C127.6,42.4 127,47.4 125.6,54.4 C124,61.4 120,65.3 112,65.3 L30,64.9 C24,64.9 18,64.9 12,63.4 C5,61.2 2.2,52.4 2.2,37.2 Z"/>
<path fill="#000" d="M44.1,10.4 C45,7.6 46.8,4.8 48.8,3.3 L49.6,3.8 C48.6,6.2 47.8,8.6 47.4,11 Z M44.1,64 C45,66.8 46.8,69.6 48.8,71.1 L49.6,70.6 C48.6,68.2 47.8,65.8 47.4,63.4 Z"/>
<g fill="#fff"><path d="M40,15 C34,17 31.2,28 31.2,37.2 C31.2,46.4 34,57.4 40,59.4 C45,60 52,57 58.2,54.7 C56,48 54.7,43 54.7,37.2 C54.7,31.4 56,26.4 58.2,19.7 C52,17.4 45,14.4 40,15 Z"/>
<path d="M91.2,18.8 L106,18.1 C110,19.4 111.3,30 111.3,37.2 C111.3,44.4 110,55 106,56.3 L91.2,55.6 C95,52 96,44 96,37.2 C96,30.4 95,22.4 91.2,18.8 Z"/>
<path d="M47.2,12.4 C60,11.4 95,11.4 106.9,14.1 C95,17.6 65,18 47.2,14.6 Z"/>
<path d="M47.2,62 C60,63 95,63 106.9,60.3 C95,56.8 65,56.4 47.2,59.8 Z"/></g></g></svg>
<div class="lbl" style="left:1229.20px;top:1099.20px;width:101.40px;height:57.50px;"></div><span class="t" style="left:1250.00px;top:1115.00px;font-size:31.52px;letter-spacing:0.211px;color:#000;font-weight:700;">B 06</span>
<div class="lbl" style="left:1416.10px;top:1097.00px;width:101.40px;height:57.20px;"></div><span class="t" style="left:1429.88px;top:1113.00px;font-size:31.52px;letter-spacing:-0.600px;color:#000;font-weight:700;">B 11</span>
</section><section>
<div class="hl" style="left:1670.50px;top:471.00px;width:328.00px;height:2.00px;"></div><div class="hl" style="left:1670.50px;top:590.00px;width:328.00px;height:2.00px;"></div><div class="hl" style="left:1670.50px;top:708.00px;width:328.00px;height:2.00px;"></div><div class="hl" style="left:1670.50px;top:827.00px;width:328.00px;height:2.00px;"></div><div class="hl" style="left:1666.30px;top:946.00px;width:327.60px;height:2.00px;"></div><div class="hl" style="left:1666.30px;top:1065.00px;width:327.60px;height:2.00px;"></div><div class="hl" style="left:1666.30px;top:1183.00px;width:327.60px;height:2.00px;"></div><div class="vl" style="left:1829.00px;top:471.00px;width:2.00px;height:726.40px;"></div>
<div class="lbl" style="left:1689.90px;top:507.80px;width:101.70px;height:57.50px;"></div><span class="t" style="left:1706.77px;top:524.00px;font-size:31.52px;letter-spacing:-0.600px;color:#000;font-weight:700;">C 01</span>
<div class="lbl" style="left:1857.80px;top:507.80px;width:101.70px;height:57.50px;"></div><span class="t" style="left:1878.40px;top:524.00px;font-size:31.52px;letter-spacing:-0.655px;color:#000;font-weight:700;">C 07</span>
<div class="lbl" style="left:1689.90px;top:628.60px;width:101.70px;height:58.10px;"></div><span class="t" style="left:1710.30px;top:645.00px;font-size:31.52px;letter-spacing:-0.289px;color:#000;font-weight:700;">C 02</span>
<div class="lbl" style="left:1857.80px;top:628.60px;width:101.70px;height:58.10px;"></div><span class="t" style="left:1878.40px;top:645.00px;font-size:31.52px;letter-spacing:0.345px;color:#000;font-weight:700;">C 08</span>
<div class="lbl" style="left:1689.90px;top:740.60px;width:101.70px;height:57.70px;"></div><span class="t" style="left:1710.30px;top:756.00px;font-size:31.52px;letter-spacing:-0.289px;color:#000;font-weight:700;">C 03</span>
<div class="lbl" style="left:1857.80px;top:740.60px;width:101.70px;height:57.70px;"></div><span class="t" style="left:1878.40px;top:756.00px;font-size:31.52px;letter-spacing:0.345px;color:#000;font-weight:700;">C 09</span>
<div class="lbl" style="left:1689.90px;top:854.70px;width:101.70px;height:57.50px;"></div><span class="t" style="left:1710.30px;top:871.00px;font-size:31.52px;letter-spacing:0.378px;color:#000;font-weight:700;">C 04</span>
<div class="lbl" style="left:1857.80px;top:854.70px;width:101.70px;height:57.50px;"></div><span class="t" style="left:1875.82px;top:871.00px;font-size:31.52px;letter-spacing:-0.600px;color:#000;font-weight:700;">C 10</span>
<div class="lbl" style="left:1685.70px;top:980.60px;width:101.70px;height:57.20px;"></div><span class="t" style="left:1707.42px;top:997.00px;font-size:31.52px;letter-spacing:0.900px;color:#000;font-weight:700;">C 05</span>
<svg class="carbg" style="left:1842.8px;top:975.0px" width="131.7" height="75.3" viewBox="0 0 131.5 75" preserveAspectRatio="none"><g><path fill="#000" d="M2.2,37.2 C2.2,22 5,13.2 12,11 C18,9.5 24,9.5 30,9.5 L112,9.1 C120,9.1 124,13 125.6,20 C127,27 127.6,32 127.6,37.2 C127.6,42.4 127,47.4 125.6,54.4 C124,61.4 120,65.3 112,65.3 L30,64.9 C24,64.9 18,64.9 12,63.4 C5,61.2 2.2,52.4 2.2,37.2 Z"/>
<path fill="#000" d="M44.1,10.4 C45,7.6 46.8,4.8 48.8,3.3 L49.6,3.8 C48.6,6.2 47.8,8.6 47.4,11 Z M44.1,64 C45,66.8 46.8,69.6 48.8,71.1 L49.6,70.6 C48.6,68.2 47.8,65.8 47.4,63.4 Z"/>
<g fill="#fff"><path d="M40,15 C34,17 31.2,28 31.2,37.2 C31.2,46.4 34,57.4 40,59.4 C45,60 52,57 58.2,54.7 C56,48 54.7,43 54.7,37.2 C54.7,31.4 56,26.4 58.2,19.7 C52,17.4 45,14.4 40,15 Z"/>
<path d="M91.2,18.8 L106,18.1 C110,19.4 111.3,30 111.3,37.2 C111.3,44.4 110,55 106,56.3 L91.2,55.6 C95,52 96,44 96,37.2 C96,30.4 95,22.4 91.2,18.8 Z"/>
<path d="M47.2,12.4 C60,11.4 95,11.4 106.9,14.1 C95,17.6 65,18 47.2,14.6 Z"/>
<path d="M47.2,62 C60,63 95,63 106.9,60.3 C95,56.8 65,56.4 47.2,59.8 Z"/></g></g></svg>
<div class="lbl" style="left:1685.70px;top:1098.90px;width:101.70px;height:57.90px;"></div><span class="t" style="left:1707.42px;top:1115.00px;font-size:31.52px;letter-spacing:0.900px;color:#000;font-weight:700;">C 06</span>
<div class="lbl" style="left:1872.80px;top:1097.10px;width:101.30px;height:56.80px;"></div><span class="t" style="left:1888.33px;top:1114.00px;font-size:31.52px;letter-spacing:-0.600px;color:#000;font-weight:700;">C 11</span>
</section><section>
<div class="hl" style="left:2094.70px;top:471.00px;width:327.30px;height:2.00px;"></div><div class="hl" style="left:2094.70px;top:590.00px;width:327.30px;height:2.00px;"></div><div class="hl" style="left:2094.70px;top:708.00px;width:327.30px;height:2.00px;"></div><div class="hl" style="left:2094.70px;top:827.00px;width:327.30px;height:2.00px;"></div><div class="hl" style="left:2090.00px;top:946.00px;width:327.80px;height:2.00px;"></div><div class="hl" style="left:2090.00px;top:1065.00px;width:327.80px;height:2.00px;"></div><div class="hl" style="left:2090.00px;top:1183.00px;width:327.80px;height:2.00px;"></div><div class="vl" style="left:2253.00px;top:471.00px;width:2.00px;height:726.40px;"></div>
<svg class="carbg" style="left:2106.4px;top:490.8px" width="131.4" height="73.9" viewBox="0 0 131.5 75" preserveAspectRatio="none"><g transform="translate(131.5 0) scale(-1 1)"><path fill="#000" d="M2.2,37.2 C2.2,22 5,13.2 12,11 C18,9.5 24,9.5 30,9.5 L112,9.1 C120,9.1 124,13 125.6,20 C127,27 127.6,32 127.6,37.2 C127.6,42.4 127,47.4 125.6,54.4 C124,61.4 120,65.3 112,65.3 L30,64.9 C24,64.9 18,64.9 12,63.4 C5,61.2 2.2,52.4 2.2,37.2 Z"/>
<path fill="#000" d="M44.1,10.4 C45,7.6 46.8,4.8 48.8,3.3 L49.6,3.8 C48.6,6.2 47.8,8.6 47.4,11 Z M44.1,64 C45,66.8 46.8,69.6 48.8,71.1 L49.6,70.6 C48.6,68.2 47.8,65.8 47.4,63.4 Z"/>
<g fill="#fff"><path d="M40,15 C34,17 31.2,28 31.2,37.2 C31.2,46.4 34,57.4 40,59.4 C45,60 52,57 58.2,54.7 C56,48 54.7,43 54.7,37.2 C54.7,31.4 56,26.4 58.2,19.7 C52,17.4 45,14.4 40,15 Z"/>
<path d="M91.2,18.8 L106,18.1 C110,19.4 111.3,30 111.3,37.2 C111.3,44.4 110,55 106,56.3 L91.2,55.6 C95,52 96,44 96,37.2 C96,30.4 95,22.4 91.2,18.8 Z"/>
<path d="M47.2,12.4 C60,11.4 95,11.4 106.9,14.1 C95,17.6 65,18 47.2,14.6 Z"/>
<path d="M47.2,62 C60,63 95,63 106.9,60.3 C95,56.8 65,56.4 47.2,59.8 Z"/></g></g></svg>
<div class="lbl" style="left:2276.70px;top:505.00px;width:102.20px;height:58.00px;"></div><span class="t" style="left:2296.90px;top:522.00px;font-size:31.52px;letter-spacing:-0.055px;color:#000;font-weight:700;">D 07</span>
<div class="lbl" style="left:2101.70px;top:626.40px;width:102.20px;height:57.50px;"></div><span class="t" style="left:2121.70px;top:643.00px;font-size:31.52px;letter-spacing:0.578px;color:#000;font-weight:700;">D 02</span>
<div class="lbl" style="left:2281.40px;top:622.20px;width:101.40px;height:57.20px;"></div><span class="t" style="left:2301.22px;top:638.00px;font-size:31.52px;letter-spacing:0.900px;color:#000;font-weight:700;">D 08</span>
<div class="lbl" style="left:2101.70px;top:738.30px;width:102.20px;height:57.50px;"></div><span class="t" style="left:2121.70px;top:755.00px;font-size:31.52px;letter-spacing:0.578px;color:#000;font-weight:700;">D 03</span>
<svg class="carbg" style="left:2266.9px;top:745.0px" width="131.4" height="75.0" viewBox="0 0 131.5 75" preserveAspectRatio="none"><g><path fill="#000" d="M2.2,37.2 C2.2,22 5,13.2 12,11 C18,9.5 24,9.5 30,9.5 L112,9.1 C120,9.1 124,13 125.6,20 C127,27 127.6,32 127.6,37.2 C127.6,42.4 127,47.4 125.6,54.4 C124,61.4 120,65.3 112,65.3 L30,64.9 C24,64.9 18,64.9 12,63.4 C5,61.2 2.2,52.4 2.2,37.2 Z"/>
<path fill="#000" d="M44.1,10.4 C45,7.6 46.8,4.8 48.8,3.3 L49.6,3.8 C48.6,6.2 47.8,8.6 47.4,11 Z M44.1,64 C45,66.8 46.8,69.6 48.8,71.1 L49.6,70.6 C48.6,68.2 47.8,65.8 47.4,63.4 Z"/>
<g fill="#fff"><path d="M40,15 C34,17 31.2,28 31.2,37.2 C31.2,46.4 34,57.4 40,59.4 C45,60 52,57 58.2,54.7 C56,48 54.7,43 54.7,37.2 C54.7,31.4 56,26.4 58.2,19.7 C52,17.4 45,14.4 40,15 Z"/>
<path d="M91.2,18.8 L106,18.1 C110,19.4 111.3,30 111.3,37.2 C111.3,44.4 110,55 106,56.3 L91.2,55.6 C95,52 96,44 96,37.2 C96,30.4 95,22.4 91.2,18.8 Z"/>
<path d="M47.2,12.4 C60,11.4 95,11.4 106.9,14.1 C95,17.6 65,18 47.2,14.6 Z"/>
<path d="M47.2,62 C60,63 95,63 106.9,60.3 C95,56.8 65,56.4 47.2,59.8 Z"/></g></g></svg>
<svg class="carbg" style="left:2112.8px;top:845.0px" width="131.4" height="73.6" viewBox="0 0 131.5 75" preserveAspectRatio="none"><g transform="translate(131.5 0) scale(-1 1)"><path fill="#000" d="M2.2,37.2 C2.2,22 5,13.2 12,11 C18,9.5 24,9.5 30,9.5 L112,9.1 C120,9.1 124,13 125.6,20 C127,27 127.6,32 127.6,37.2 C127.6,42.4 127,47.4 125.6,54.4 C124,61.4 120,65.3 112,65.3 L30,64.9 C24,64.9 18,64.9 12,63.4 C5,61.2 2.2,52.4 2.2,37.2 Z"/>
<path fill="#000" d="M44.1,10.4 C45,7.6 46.8,4.8 48.8,3.3 L49.6,3.8 C48.6,6.2 47.8,8.6 47.4,11 Z M44.1,64 C45,66.8 46.8,69.6 48.8,71.1 L49.6,70.6 C48.6,68.2 47.8,65.8 47.4,63.4 Z"/>
<g fill="#fff"><path d="M40,15 C34,17 31.2,28 31.2,37.2 C31.2,46.4 34,57.4 40,59.4 C45,60 52,57 58.2,54.7 C56,48 54.7,43 54.7,37.2 C54.7,31.4 56,26.4 58.2,19.7 C52,17.4 45,14.4 40,15 Z"/>
<path d="M91.2,18.8 L106,18.1 C110,19.4 111.3,30 111.3,37.2 C111.3,44.4 110,55 106,56.3 L91.2,55.6 C95,52 96,44 96,37.2 C96,30.4 95,22.4 91.2,18.8 Z"/>
<path d="M47.2,12.4 C60,11.4 95,11.4 106.9,14.1 C95,17.6 65,18 47.2,14.6 Z"/>
<path d="M47.2,62 C60,63 95,63 106.9,60.3 C95,56.8 65,56.4 47.2,59.8 Z"/></g></g></svg>
<div class="lbl" style="left:2276.70px;top:852.80px;width:101.60px;height:56.90px;"></div><span class="t" style="left:2294.42px;top:869.00px;font-size:31.52px;letter-spacing:-0.600px;color:#000;font-weight:700;">D 10</span>
<div class="lbl" style="left:2094.70px;top:978.30px;width:101.40px;height:57.50px;"></div><span class="t" style="left:2114.70px;top:995.00px;font-size:31.52px;letter-spacing:0.778px;color:#000;font-weight:700;">D 05</span>
<svg class="carbg" style="left:2266.9px;top:975.0px" width="131.4" height="75.6" viewBox="0 0 131.5 75" preserveAspectRatio="none"><g><path fill="#000" d="M2.2,37.2 C2.2,22 5,13.2 12,11 C18,9.5 24,9.5 30,9.5 L112,9.1 C120,9.1 124,13 125.6,20 C127,27 127.6,32 127.6,37.2 C127.6,42.4 127,47.4 125.6,54.4 C124,61.4 120,65.3 112,65.3 L30,64.9 C24,64.9 18,64.9 12,63.4 C5,61.2 2.2,52.4 2.2,37.2 Z"/>
<path fill="#000" d="M44.1,10.4 C45,7.6 46.8,4.8 48.8,3.3 L49.6,3.8 C48.6,6.2 47.8,8.6 47.4,11 Z M44.1,64 C45,66.8 46.8,69.6 48.8,71.1 L49.6,70.6 C48.6,68.2 47.8,65.8 47.4,63.4 Z"/>
<g fill="#fff"><path d="M40,15 C34,17 31.2,28 31.2,37.2 C31.2,46.4 34,57.4 40,59.4 C45,60 52,57 58.2,54.7 C56,48 54.7,43 54.7,37.2 C54.7,31.4 56,26.4 58.2,19.7 C52,17.4 45,14.4 40,15 Z"/>
<path d="M91.2,18.8 L106,18.1 C110,19.4 111.3,30 111.3,37.2 C111.3,44.4 110,55 106,56.3 L91.2,55.6 C95,52 96,44 96,37.2 C96,30.4 95,22.4 91.2,18.8 Z"/>
<path d="M47.2,12.4 C60,11.4 95,11.4 106.9,14.1 C95,17.6 65,18 47.2,14.6 Z"/>
<path d="M47.2,62 C60,63 95,63 106.9,60.3 C95,56.8 65,56.4 47.2,59.8 Z"/></g></g></svg>
<div class="lbl" style="left:2094.70px;top:1097.00px;width:101.40px;height:57.20px;"></div><span class="t" style="left:2114.70px;top:1113.00px;font-size:31.52px;letter-spacing:0.778px;color:#000;font-weight:700;">D 06</span>
<div class="lbl" style="left:2281.40px;top:1095.00px;width:101.40px;height:57.00px;"></div><span class="t" style="left:2295.13px;top:1111.00px;font-size:31.52px;letter-spacing:-0.600px;color:#000;font-weight:700;">D 11</span>
</section>
<svg style="left:1500px;top:440px;overflow:visible;filter:drop-shadow(0 4px 10px rgba(0,0,0,.42))" width="560" height="600" viewBox="1500 440 560 600"><path fill="#f7f7f7" stroke="#1f5c50" stroke-width="1.4" d="M1573,483.5 H1984.8 A13,13 0 0 1 1997.8,496.5 V974.2 A13,13 0 0 1 1984.8,987.2 H1573 A13,13 0 0 1 1560,974.2 V578 C1560,574 1558.6,572 1556.6,569.4 L1539,546.4 C1536.4,543 1536.4,539.6 1539,536.2 L1556.6,514.4 C1558.6,511.8 1560,509.8 1560,505.8 V496.5 A13,13 0 0 1 1573,483.5 Z"/></svg>
<span class="t" style="left:1606.90px;top:513.00px;font-size:26.87px;letter-spacing:-0.321px;color:#000;-webkit-text-stroke:1.18px #000;">Block No:  B 07</span>
<span class="t" style="left:1606.90px;top:555.00px;font-size:26.87px;letter-spacing:-0.274px;color:#000;-webkit-text-stroke:1.18px #000;">Vehicle Type : Car</span>
<span class="t" style="left:1606.90px;top:600.00px;font-size:26.87px;letter-spacing:-0.051px;color:#000;-webkit-text-stroke:1.18px #000;">Floor : N/A</span>
<span class="t" style="left:1606.90px;top:657.00px;font-size:26.87px;letter-spacing:0.165px;color:#000;-webkit-text-stroke:1.18px #000;">Time Slots</span>
<span class="t" style="left:1607.10px;top:701.00px;font-size:27.16px;letter-spacing:-0.192px;color:#000;-webkit-text-stroke:1.20px #000;">8.00  - 10.00</span>
<span class="t" style="left:1605.60px;top:753.00px;font-size:27.16px;letter-spacing:-0.249px;color:#000;-webkit-text-stroke:1.20px #000;">10.00 - 12.00</span>
<span class="t" style="left:1607.80px;top:804.00px;font-size:27.16px;letter-spacing:-0.251px;color:#000;-webkit-text-stroke:1.20px #000;">12.00 - 2.00</span>
<span class="t" style="left:1607.10px;top:849.00px;font-size:27.16px;letter-spacing:-0.246px;color:#000;-webkit-text-stroke:1.20px #000;">2.00  - 4.00</span>
<span class="t" style="left:1833.80px;top:697.00px;font-size:27.16px;letter-spacing:-0.646px;color:#fb1010;-webkit-text-stroke:1.20px #fb1010;">Booked</span>
<span class="t" style="left:1833.80px;top:750.00px;font-size:27.16px;letter-spacing:-0.241px;color:#168c16;-webkit-text-stroke:1.20px #168c16;">Available</span>
<span class="t" style="left:1833.80px;top:799.00px;font-size:27.16px;letter-spacing:-0.241px;color:#168c16;-webkit-text-stroke:1.20px #168c16;">Available</span>
<span class="t" style="left:1833.80px;top:847.00px;font-size:27.16px;letter-spacing:-0.646px;color:#fb1010;-webkit-text-stroke:1.20px #fb1010;">Booked</span>
<button style="left:1784.90px;top:907.80px;width:191.30px;height:62.90px;background:#6b6b6b;border-radius:12px"></button>
<span class="t" style="left:1811.80px;top:924.00px;font-size:27.45px;letter-spacing:-0.555px;color:#fff;">Add to Cart</span>
<span class="t" style="left:709.10px;top:1234.00px;font-size:23.38px;letter-spacing:0.214px;color:#000;-webkit-text-stroke:1.03px #000;">Service Charge - 200/=</span>
<span class="t" style="left:745.60px;top:1266.00px;font-size:23.38px;letter-spacing:0.318px;color:#000;-webkit-text-stroke:1.03px #000;">Per hour - 150/=</span>
<span class="t" style="left:673.40px;top:1303.00px;font-size:23.38px;letter-spacing:0.349px;color:#000;-webkit-text-stroke:1.03px #000;">Late charges - 500/= per hour</span>
<button style="left:1931.60px;top:1252.10px;width:188.80px;height:76.00px;background:#115045;border-radius:12px"></button>
<svg style="left:1956px;top:1268.15px" width="48.6" height="48.6" viewBox="0 0 24 24"><path fill="#fff" d="M7 18c-1.1 0-1.99.9-1.99 2S5.900 22 7 22s2-.9 2-2-.9-2-2-2zM1 2v2h2l3.600 7.590-1.350 2.450c-.16.28-.25.61-.25.96 0 1.1.9 2 2 2h12v-2H7.420c-.14 0-.25-.11-.25-.25l.03-.12.9-1.630h7.450c.75 0 1.410-.41 1.750-1.030l3.580-6.490c.08-.14.12-.31.12-.47 0-.55-.45-1-1-1H5.210l-.94-2H1zm16 16c-1.1 0-1.990.9-1.990 2s.89 2 1.990 2 2-.9 2-2-.9-2-2-2z"/></svg>
<span class="t" style="left:2026.60px;top:1278.00px;font-size:31.45px;letter-spacing:-0.943px;color:#fff;font-weight:700;">Cart</span>
<button style="left:2191.10px;top:1252.10px;width:220.40px;height:75.30px;background:#f2f2f2;border:3px solid #a9dcd3;border-radius:13px"></button>
<span class="t" style="left:2238.50px;top:1275.00px;font-size:30.95px;letter-spacing:-0.928px;color:#115045;font-weight:700;">Continue</span>
</main>
<footer>
<div style="left:0.00px;top:1368.60px;width:2558.00px;height:71.40px;background:rgba(217,217,217,.9)"></div>
<span class="t" style="left:112.75px;top:1389.00px;font-size:28.61px;letter-spacing:1.309px;color:#115045;font-weight:700;-webkit-text-stroke:1.00px #115045;">Hotline : 034 222 22 22</span>
<svg style="left:636px;top:1380px" width="50" height="48" viewBox="636 1380 50 48"><path fill="#115045" d="M648,1387.6 C654,1387 668,1387 674,1387.6 C678.6,1388 680.6,1390.4 681,1395 C681.4,1400 681.4,1408 681,1412.6 C680.6,1417.4 678.6,1419.6 674,1420 C668,1420.6 654,1420.6 648,1420 C643.4,1419.6 641.2,1417.4 640.8,1412.6 C640.4,1408 640.4,1400 640.8,1395 C641.2,1390.4 643.4,1388 648,1387.6 Z M656.9,1397.6 L656.9,1410 L668,1403.8 Z" fill-rule="evenodd"/></svg>
<svg style="left:726px;top:1387.3px" width="32.1" height="32.9" viewBox="1.254 2.25 21.573 19.5" preserveAspectRatio="none"><path fill="#115045" d="M18.244 2.25h3.308l-7.227 8.260 8.502 11.240H16.170l-5.214-6.817L4.990 21.750H1.680l7.730-8.835L1.254 2.250H8.080l4.713 6.231zm-1.161 17.520h1.833L7.084 4.126H5.117z"/></svg>
<svg style="left:803px;top:1385.7px" width="36.2" height="36.3" viewBox="0 0 36.2 36.3"><path fill="#115045" fill-rule="evenodd" d="M3.4,0 H32.8 Q36.2,0 36.2,3.4 V32.9 Q36.2,36.3 32.8,36.3 H24.4 V22.6 H29 L29.8,17.4 H24.4 V14.4 C24.4,12.4 25.2,11.4 27.4,11.4 H30 V6.8 C29,6.6 27.4,6.4 25.8,6.4 C21.4,6.4 18.6,9 18.6,13.8 V17.4 H13.8 V22.6 H18.6 V36.3 H3.4 Q0,36.3 0,32.9 V3.4 Q0,0 3.4,0 Z"/></svg>
<svg style="left:880px;top:1381px" width="46" height="46" viewBox="880 1381 46 46"><g fill="none" stroke="#115045"><rect x="884.8" y="1386.2" width="34.9" height="35.1" rx="9.5" stroke-width="5"/><circle cx="900.9" cy="1404.8" r="5.2" stroke-width="3.6"/><circle cx="910.9" cy="1395" r="3.1" stroke-width="2.6"/></g></svg>
<a class="t" style="left:1213.60px;top:1391.00px;font-size:26.95px;letter-spacing:-0.808px;color:#3b776b;">Privacy Policy</a>
<a class="t" style="left:1423.80px;top:1391.00px;font-size:26.78px;letter-spacing:-0.803px;color:#3b776b;">Manage Cookies</a>
<a class="t" style="left:1667.50px;top:1391.00px;font-size:26.91px;letter-spacing:-0.807px;color:#3b776b;">Rules &amp; Condition</a>
<span class="t" style="left:2223.60px;top:1392.00px;font-size:27.16px;letter-spacing:-0.204px;color:#115045;-webkit-text-stroke:1.20px #115045;">Copyright © 2024 MrPark</span>
</footer>
<div style="left:0.00px;top:0.00px;width:1.20px;height:1440.00px;background:#3b3938"></div>
<div style="left:2557.60px;top:0.00px;width:2.40px;height:1440.00px;background:#111"></div>
<div style="left:0.00px;top:1437.60px;width:2560.00px;height:2.40px;background:#3a3a3a"></div>
</div></body></html>
